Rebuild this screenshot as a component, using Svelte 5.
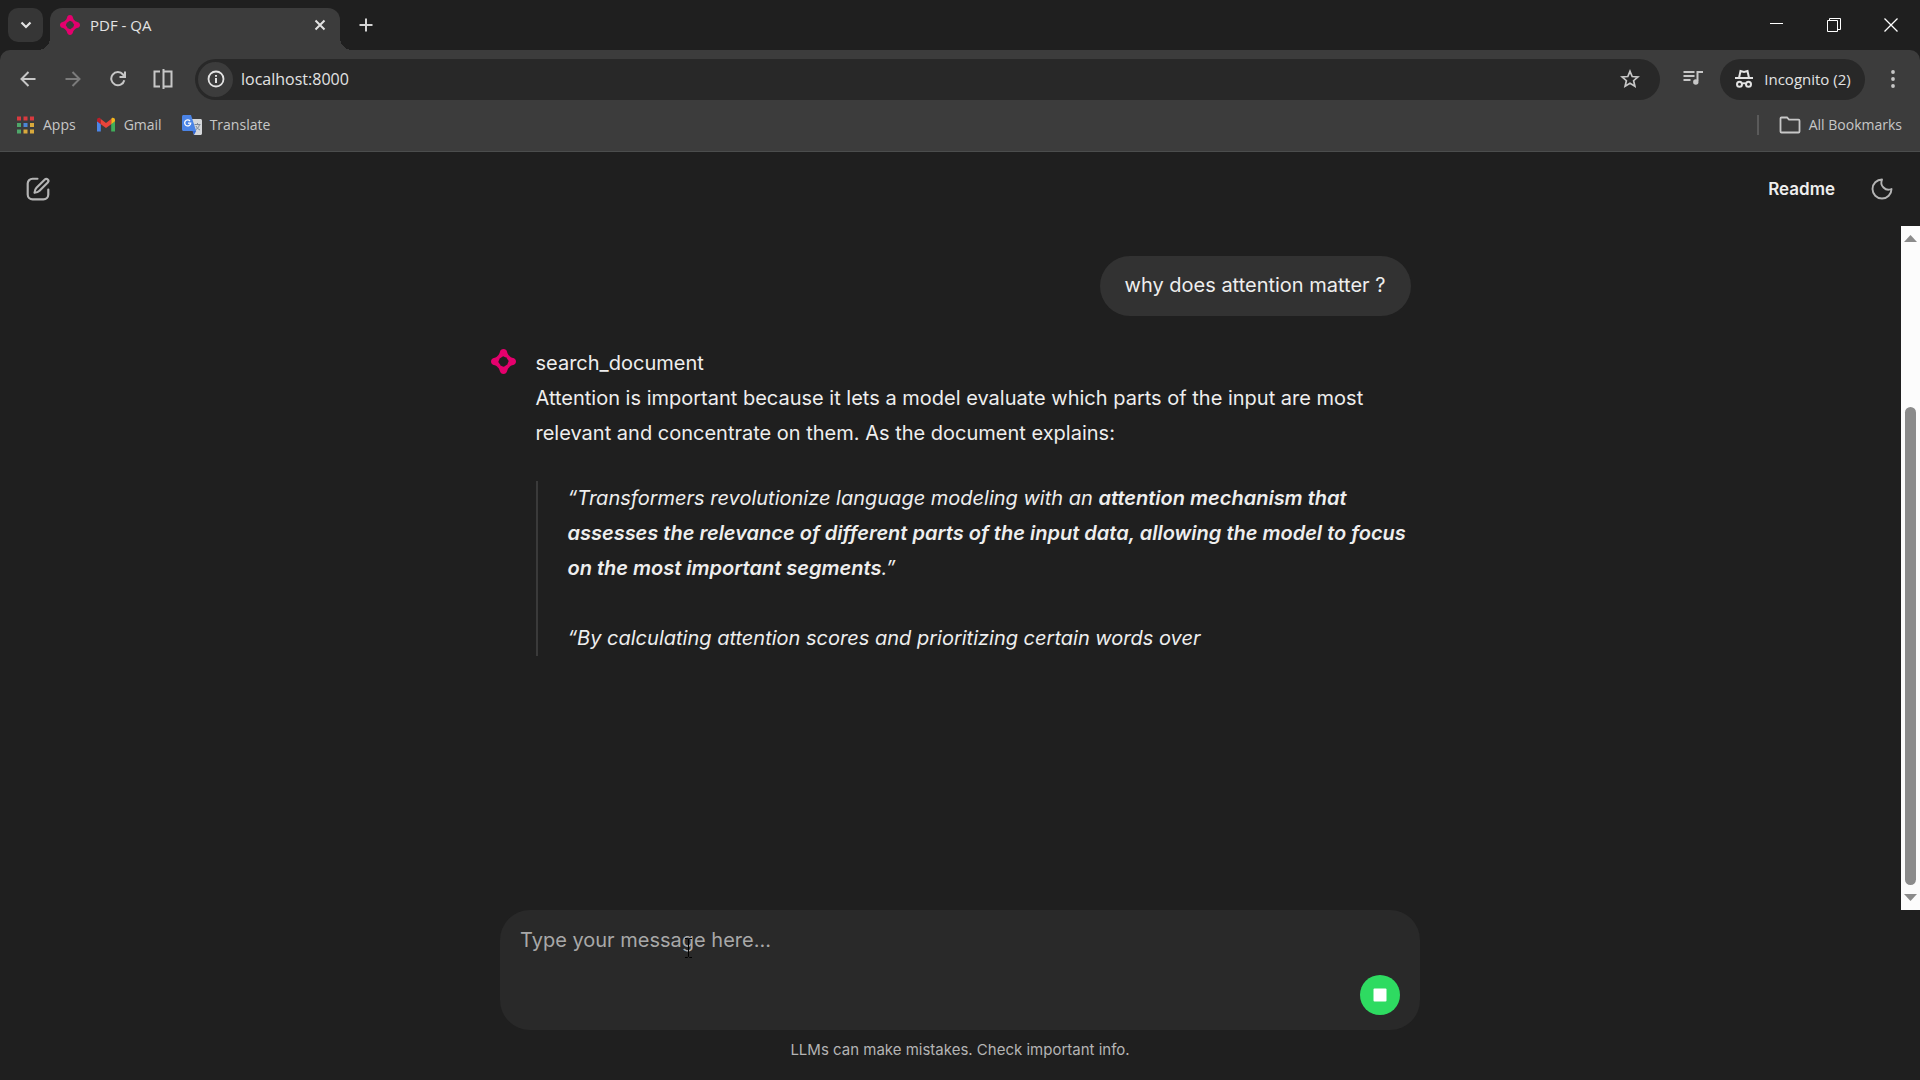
<script>
	let message = $state('');

	const thumb = { top: 24.6, size: 75.4 };
	const appColors = ['#d93a3f', '#d93a3f', '#d93a3f', '#4fa76a', '#4c86d6', '#d9a93c', '#4fa76a', '#d9a93c', '#d9a93c'];
</script>

{#snippet logo()}
	<svg class="logo" viewBox="0 0 24 24" fill="#e5006d" aria-hidden="true">
		{#each [0, 90, 180, 270] as angle}
			<path
				transform="rotate({angle} 12 12)"
				d="M12 0c1.800 0 3 1.100 3.400 2.600.4 1.600 1 3 2.200 4L16.200 8.400C15 8.800 13.200 7.400 11.600 7L8.400 9.200 6.400 6.600C7.600 5.600 8.200 4.200 8.600 2.600 9 1.100 10.200 0 12 0z"
			/>
		{/each}
	</svg>
{/snippet}

<div class="window">
	<div class="tabs">
		<button class="search-tabs" aria-label="Search tabs">
			<svg width="12" height="12" viewBox="0 0 12 12" fill="none" stroke="#e3e3e3" stroke-width="2.2"><path d="M1.500 3.500 6 8l4.500-4.500" /></svg>
		</button>
		<div class="tab">
			{@render logo()}
			<span>PDF - QA</span>
			<button aria-label="Close tab">
				<svg width="12" height="12" viewBox="0 0 12 12" fill="none" stroke="#e3e3e3" stroke-width="2"><path d="m1.500 1.500 9 9m0-9-9 9" /></svg>
			</button>
		</div>
		<button class="new-tab" aria-label="New tab">
			<svg width="14" height="14" viewBox="0 0 14 14" fill="none" stroke="#d4d4d4" stroke-width="2"><path d="M7 .5v13M.5 7h13" /></svg>
		</button>
		<div class="controls">
			<button aria-label="Minimize">
				<svg width="14" height="14" viewBox="0 0 14 14" stroke="#fff"><path d="M0 5.500h13" /></svg>
			</button>
			<button aria-label="Restore">
				<svg width="14" height="14" viewBox="0 0 14 14" fill="none" stroke="#fff"><path d="M.5 2.500h10v11H.5zM2.500 2.500v-2h11v11h-3" /></svg>
			</button>
			<button aria-label="Close">
				<svg width="14" height="14" viewBox="0 0 14 14" fill="none" stroke="#fff" stroke-width="1.3"><path d="m.5.5 13 13m0-13-13 13" /></svg>
			</button>
		</div>
	</div>

	<div class="chrome">
		<div class="toolbar">
			<button class="tool" aria-label="Back">
				<svg width="16" height="16" viewBox="0 0 16 16" fill="none" stroke="#c7c7c7" stroke-width="2"><path d="M15.500 8H2M8.500 1 1.500 8l7 7" /></svg>
			</button>
			<button class="tool" aria-label="Forward">
				<svg width="16" height="16" viewBox="0 0 16 16" fill="none" stroke="#7b7b7b" stroke-width="2"><path d="M.5 8H14M7.500 1l7 7-7 7" /></svg>
			</button>
			<button class="tool" aria-label="Reload">
				<svg width="16" height="16" viewBox="0 0 16 16" fill="none" stroke="#c7c7c7" stroke-width="2"><path d="M14.300 9.200A6.600 6.600 0 1 1 13 3.500l1.500 1.800M15 .5V6H9.500" /></svg>
			</button>
			<button class="tool" aria-label="Split view">
				<svg width="20" height="20" viewBox="0 0 20 20" fill="none" stroke="#c7c7c7" stroke-width="2"><path d="M7 2.500H1.500v15H7M10.500 0v20M10.500 2.500h8v15h-8" /></svg>
			</button>
			<div class="omnibox">
				<button class="info" aria-label="Site information">
					<svg width="18" height="18" viewBox="0 0 18 18" fill="none" stroke="#e3e3e3" stroke-width="1.800"><circle cx="9" cy="9" r="7.500" /><path d="M9 8v5M9 5v1.800" stroke-width="2" /></svg>
				</button>
				<input aria-label="Address" value="localhost:8000" />
				<button class="star" aria-label="Bookmark this page">
					<svg width="20" height="20" viewBox="0 0 20 20" fill="none" stroke="#c7c7c7" stroke-width="1.700"><path d="m10 2.300 2.200 5.200 5.700.5-4.300 3.700 1.300 5.500-4.900-2.900-4.900 2.900 1.300-5.500L2.100 8l5.700-.5z" /></svg>
				</button>
			</div>
			<button class="tool" aria-label="Media controls">
				<svg width="20" height="20" viewBox="0 0 20 20" fill="none" stroke="#c7c7c7" stroke-width="2"><path d="M.5 3h11M.5 7h11M.5 11h7M14.500 12V3H20" /><circle cx="12.800" cy="13" r="2.700" fill="#c7c7c7" stroke="none" /></svg>
			</button>
			<button class="incognito">
				<svg width="20" height="20" viewBox="0 0 20 20" fill="none" stroke="#e3e3e3" stroke-width="2"><path d="M1 9h18M5 9l1.500-7 3.500 1 3.500-1L15 9M8 15c1-1 3-1 4 0" /><circle cx="5.500" cy="15.200" r="2.500" /><circle cx="14.500" cy="15.200" r="2.500" /></svg>
				Incognito (2)
			</button>
			<button class="tool" aria-label="Browser menu">
				<svg width="18" height="18" viewBox="0 0 18 18" fill="#c7c7c7"><circle cx="9" cy="2" r="1.900" /><circle cx="9" cy="9" r="1.900" /><circle cx="9" cy="16" r="1.900" /></svg>
			</button>
		</div>
		<nav class="bookmarks">
			<a href="#apps">
				<svg width="20" height="20" viewBox="0 0 20 20">
					{#each appColors as color, i}
						<rect x={2 + (i % 3) * 6.5} y={1.5 + Math.floor(i / 3) * 6.5} width="4" height="4" fill={color} />
					{/each}
				</svg>
				Apps
			</a>
			<a href="#gmail">
				<svg width="20" height="20" viewBox="0 0 20 20">
					<path d="M1 6v10.500h3.800V8.800z" fill="#4c86e8" />
					<path d="M19 6v10.500h-3.800V8.800z" fill="#3fae5a" />
					<path d="M15.200 4.200v5L19 6.300V4.800c0-1.800-2-2.700-3.400-1.600z" fill="#f2b51e" />
					<path d="M1 4.800v1.500l3.800 2.900v-5l-.4-1C3 2.100 1 3 1 4.800z" fill="#b9202a" />
					<path d="M4.800 9.200V4.100L10 8l5.200-3.900v5.100L10 13.100z" fill="#e8443a" />
				</svg>
				Gmail
			</a>
			<a href="#translate">
				<svg width="20" height="20" viewBox="0 0 20 20">
					<path d="M8 4h10.500c.8 0 1.500.7 1.500 1.500v13c0 .8-.7 1.500-1.500 1.500H12z" fill="#d5d7da" />
					<path d="M12.500 9.500h6M15.500 8v1.500m2 0c-.5 2.500-2 4-4 5.500m.5-4c.8 1.800 2 3 4 4" fill="none" stroke="#7c8798" />
					<path d="M10.500 16h3.700L12 20z" fill="#3367d6" />
					<path d="M1.500 0H9l5.200 16H1.500C.7 16 0 15.300 0 14.500v-13C0 .7.7 0 1.500 0z" fill="#4b84e6" />
					<path d="M8 6a3 3 0 1 0 .7 2.200H6" fill="none" stroke="#fff" stroke-width="1.300" />
				</svg>
				Translate
			</a>
			<a class="all" href="#bookmarks">
				<svg width="22" height="18" viewBox="0 0 22 18" fill="none" stroke="#c7c7c7" stroke-width="1.800"><path d="M1.500 2.500c0-.6.400-1 1-1H8l2 2.200h9.500c.6 0 1 .4 1 1V15.500c0 .6-.4 1-1 1h-17c-.6 0-1-.4-1-1z" /></svg>
				All Bookmarks
			</a>
		</nav>
	</div>

	<header>
		<button aria-label="New chat">
			<svg width="26" height="26" viewBox="0 0 24 24" fill="none" stroke="#b4b4b4" stroke-width="2" stroke-linecap="round" stroke-linejoin="round"><path d="M11.500 2.500H7a4.500 4.500 0 0 0-4.500 4.500v10A4.500 4.500 0 0 0 7 21.500h10a4.500 4.500 0 0 0 4.500-4.500v-4.500" /><path d="M18.300 3.200a1.900 1.900 0 0 1 2.700 2.700l-7.600 7.800c-1.100 1.100-2.600 1.700-4.600 1.800.1-2 .7-3.500 1.800-4.600z" /></svg>
		</button>
		<button class="readme">Readme</button>
		<button aria-label="Toggle theme">
			<svg width="24" height="24" viewBox="0 0 24 24" fill="none" stroke="#b4b4b4" stroke-width="1.900" stroke-linecap="round" stroke-linejoin="round"><path d="M12 2.500a7.200 7.200 0 0 0 9.500 9.500A9.500 9.500 0 1 1 12 2.500z" /></svg>
		</button>
	</header>

	<main>
		<div class="thread">
			<div class="question">why does attention matter ?</div>
			<article class="answer">
				{@render logo()}
				<div>
					<div>search_document</div>
					<p>Attention is important because it lets a model evaluate which parts of the input are most relevant and concentrate on them. As the document explains:</p>
					<blockquote>
						<p>“Transformers revolutionize language modeling with an <strong>attention mechanism that assesses the relevance of different parts of the input data, allowing the model to focus on the most important segments</strong>.”</p>
						<p>“By calculating attention scores and prioritizing certain words over</p>
					</blockquote>
				</div>
			</article>
		</div>
		<div class="scrollbar">
			<svg width="13" height="7" viewBox="0 0 13 7" fill="#8b8b8b"><path d="M6.500 0 13 7H0z" /></svg>
			<div class="track">
				<div class="thumb" style="top: {thumb.top}%; height: {thumb.size}%"></div>
			</div>
			<svg width="13" height="7" viewBox="0 0 13 7" fill="#8b8b8b"><path d="M0 0h13L6.500 7z" /></svg>
		</div>
	</main>

	<footer>
		<form class="composer" onsubmit={(e) => e.preventDefault()}>
			<textarea aria-label="Message" placeholder="Type your message here..." rows="1" bind:value={message}></textarea>
			<button type="button" aria-label="Stop">
				<svg width="14" height="14" viewBox="0 0 14 14"><rect x=".5" y=".5" width="13" height="13" rx="1" fill="#fff" /></svg>
			</button>
			<svg class="cursor" width="9" height="20" viewBox="0 0 9 20" fill="none" stroke="#000"><path d="M1 .5h2.500l1 1 1-1H8M4.500 1.500v17M1 19.500h2.500l1-1 1 1H8" /></svg>
		</form>
		<p>LLMs can make mistakes. Check important info.</p>
	</footer>
</div>

<style>
	:global(body) {
		background: #1f1f1f;
	}

	.window {
		display: flex;
		flex-direction: column;
		min-height: 100vh;
		color: #eee;
		font: 20px/35px Inter, sans-serif;
	}

	button {
		display: flex;
		align-items: center;
		justify-content: center;
		padding: 0;
		border: none;
		background: none;
		color: inherit;
		font: inherit;
	}

	p {
		margin: 0;
	}

	svg {
		flex: none;
	}

	.tabs,
	.chrome {
		font: 15px/20px 'Open Sans', sans-serif;
		color: #e3e3e3;
	}

	.tabs {
		display: flex;
		height: 50px;
	}

	.search-tabs {
		width: 35px;
		height: 34px;
		margin: 8px 7px 0 8px;
		border-radius: 10px;
		background: #363636;
	}

	.tab {
		position: relative;
		display: flex;
		align-items: center;
		gap: 10px;
		width: 290px;
		box-sizing: border-box;
		margin-top: 8px;
		padding: 0 10px 8px;
		border-radius: 12px 12px 0 0;
		background: #3c3c3c;
	}

	.tab::before,
	.tab::after {
		content: '';
		position: absolute;
		bottom: 0;
		width: 12px;
		height: 12px;
	}

	.tab::before {
		right: 100%;
		background: radial-gradient(circle at 0 0, transparent 12px, #3c3c3c 12px);
	}

	.tab::after {
		left: 100%;
		background: radial-gradient(circle at 100% 0, transparent 12px, #3c3c3c 12px);
	}

	.tab .logo {
		width: 20px;
		height: 20px;
	}

	.tab span {
		flex: 1;
	}

	.tab button {
		width: 20px;
		height: 20px;
	}

	.new-tab {
		width: 52px;
	}

	.controls {
		display: flex;
		margin-left: auto;
		padding-right: 1px;
	}

	.controls button {
		width: 57px;
	}

	.chrome {
		border-bottom: 1px solid #4b4d4d;
		border-radius: 10px 10px 0 0;
		background: #3c3c3c;
	}

	.toolbar {
		display: flex;
		align-items: center;
		height: 58px;
		padding: 0 5px;
	}

	.tool {
		width: 45px;
		height: 41px;
	}

	.omnibox {
		display: flex;
		flex: 1;
		align-items: center;
		height: 41px;
		margin: 0 10px;
		border-radius: 21px;
		background: #282828;
	}

	.info {
		width: 35px;
		height: 35px;
		margin: 0 8px 0 3px;
		border-radius: 50%;
		background: #3c3c3c;
	}

	.omnibox input {
		flex: 1;
		min-width: 0;
		padding: 0;
		border: none;
		outline: none;
		background: none;
		color: #e3e3e3;
		font: 16px/24px 'Open Sans', sans-serif;
	}

	.star {
		width: 60px;
		height: 41px;
	}

	.incognito {
		gap: 10px;
		width: 145px;
		height: 41px;
		margin: 0 5px;
		border-radius: 21px;
		background: #282828;
	}

	.bookmarks {
		display: flex;
		align-items: center;
		gap: 20px;
		height: 43px;
		box-sizing: border-box;
		padding: 0 18px 9px 15px;
	}

	.bookmarks a {
		display: flex;
		align-items: center;
		gap: 8px;
		color: #c7c7c7;
		font-size: 14px;
		text-decoration: none;
	}

	.bookmarks .all {
		margin-left: auto;
		padding-left: 20px;
		border-left: 2px solid #5a5a5a;
	}

	header {
		display: flex;
		align-items: center;
		height: 74px;
		padding: 0 18px;
	}

	header button {
		width: 40px;
		height: 40px;
	}

	header .readme {
		width: auto;
		margin: 0 27px 0 auto;
		font-size: 17px;
		font-weight: 600;
	}

	main {
		display: flex;
		flex: 1;
	}

	.thread {
		display: flex;
		flex-direction: column;
		gap: 30px;
		width: 920px;
		max-width: 100%;
		margin: 0 auto;
		padding-top: 30px;
	}

	.question {
		align-self: flex-end;
		padding: 12px 25px 13px;
		border-radius: 30px;
		background: #323232;
	}

	.answer {
		display: flex;
		gap: 20px;
	}

	.answer .logo {
		width: 25px;
		height: 25px;
		margin-top: 3px;
	}

	blockquote {
		display: grid;
		gap: 35px;
		margin: 30px 0 0;
		padding-left: 30px;
		border-left: 2px solid #3a3a3a;
		font-style: italic;
	}

	strong {
		font-weight: 600;
	}

	.scrollbar {
		display: flex;
		flex-direction: column;
		align-items: center;
		gap: 9px;
		width: 19px;
		box-sizing: border-box;
		padding: 9px 0;
		background: #fcfcfc;
	}

	.track {
		position: relative;
		flex: 1;
		width: 11px;
	}

	.thumb {
		position: absolute;
		width: 100%;
		border-radius: 6px;
		background: #8b8b8b;
	}

	footer {
		width: 920px;
		max-width: 100%;
		margin: 0 auto;
		padding-bottom: 20px;
	}

	.composer {
		position: relative;
		display: flex;
		flex-direction: column;
		align-items: flex-end;
		justify-content: space-between;
		height: 120px;
		box-sizing: border-box;
		padding: 13px 20px 15px;
		border-radius: 30px;
		background: #292929;
	}

	.composer textarea {
		width: 100%;
		height: 35px;
		padding: 0;
		border: none;
		outline: none;
		resize: none;
		background: none;
		color: inherit;
		font: inherit;
	}

	.composer textarea::placeholder {
		color: #a8a8a8;
	}

	.composer button {
		width: 40px;
		height: 40px;
		border-radius: 50%;
		background: #2edb61;
	}

	.cursor {
		position: absolute;
		top: 28px;
		left: 184px;
	}

	footer p {
		margin-top: 10px;
		color: #b4b4b4;
		font-size: 15px;
		line-height: 20px;
		text-align: center;
	}
</style>
